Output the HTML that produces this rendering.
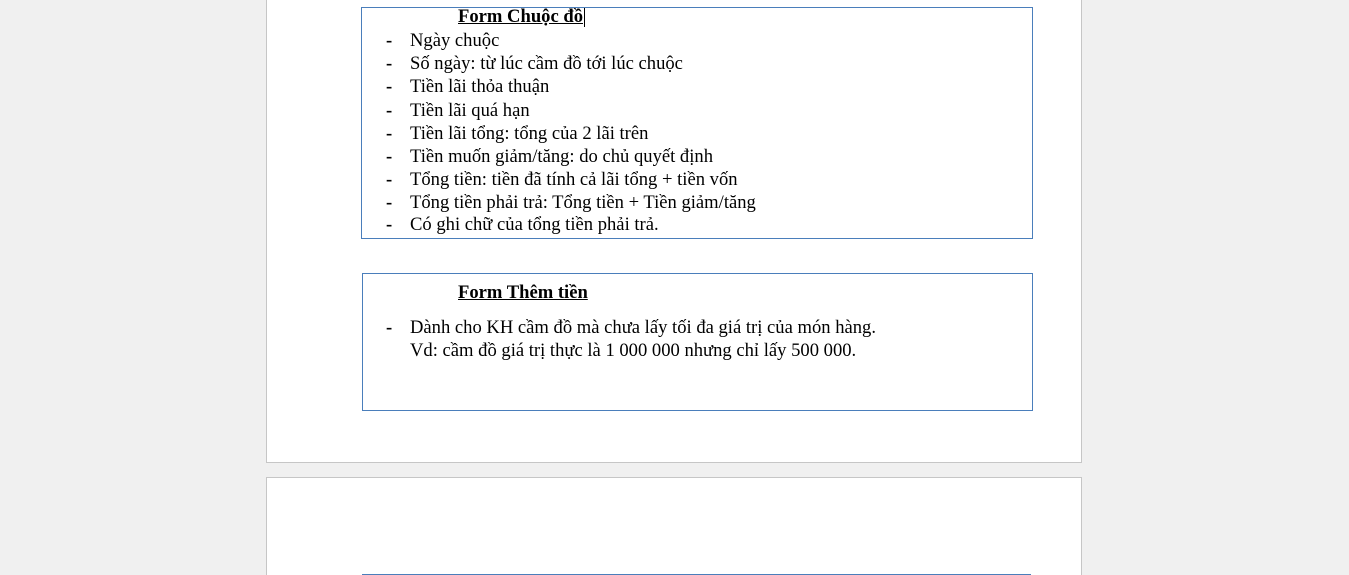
<!DOCTYPE html>
<html><head><meta charset="utf-8"><style>
html,body{margin:0;height:575px;overflow:hidden}
body{width:1349px;background:#f0f0f0;position:relative;font-family:"Liberation Serif",serif;font-size:18.6px;color:#000}
.page{position:absolute;left:266px;width:814px;background:#fff;border:1px solid #c6c6c6}
.box{position:absolute;border:1px solid #4a7ebb}
.t{position:absolute;white-space:nowrap;line-height:20px}
.d{position:absolute;left:386px;line-height:20px;font-weight:bold}
b{text-decoration:underline}
</style></head><body>
<div class="page" style="top:-2px;height:463px"></div>
<div class="page" style="top:477px;height:97px;border-bottom:none"></div>
<div class="box" style="left:361px;top:7px;width:670px;height:230px"></div>
<div class="box" style="left:362px;top:273px;width:669px;height:136px"></div>
<div style="position:absolute;left:362px;top:574px;width:669px;height:1px;background:#4a7ebb"></div>
<div class="t" style="left:458px;top:7px;font-size:18.6px"><b>Form Chuộc đồ</b><span style="display:inline-block;width:1px;height:19px;background:#000;vertical-align:middle;margin-left:1px"></span></div>
<div class="d" style="top:31px">-</div><div class="t" style="left:410px;top:31px">Ngày chuộc</div>
<div class="d" style="top:54px">-</div><div class="t" style="left:410px;top:54px">Số ngày: từ lúc cầm đồ tới lúc chuộc</div>
<div class="d" style="top:77px">-</div><div class="t" style="left:410px;top:77px">Tiền lãi thỏa thuận</div>
<div class="d" style="top:101px">-</div><div class="t" style="left:410px;top:101px">Tiền lãi quá hạn</div>
<div class="d" style="top:124px">-</div><div class="t" style="left:410px;top:124px">Tiền lãi tổng: tổng của 2 lãi trên</div>
<div class="d" style="top:147px">-</div><div class="t" style="left:410px;top:147px">Tiền muốn giảm/tăng: do chủ quyết định</div>
<div class="d" style="top:170px">-</div><div class="t" style="left:410px;top:170px">Tổng tiền: tiền đã tính cả lãi tổng + tiền vốn</div>
<div class="d" style="top:193px">-</div><div class="t" style="left:410px;top:193px">Tổng tiền phải trả: Tổng tiền + Tiền giảm/tăng</div>
<div class="d" style="top:215px">-</div><div class="t" style="left:410px;top:215px">Có ghi chữ của tổng tiền phải trả.</div>
<div class="t" style="left:458px;top:283px;font-size:18.6px"><b>Form Thêm tiền</b></div>
<div class="d" style="top:318px">-</div><div class="t" style="left:410px;top:318px">Dành cho KH cầm đồ mà chưa lấy tối đa giá trị của món hàng.</div>
<div class="t" style="left:410px;top:341px">Vd: cầm đồ giá trị thực là 1 000 000 nhưng chỉ lấy 500 000.</div>
</body></html>
